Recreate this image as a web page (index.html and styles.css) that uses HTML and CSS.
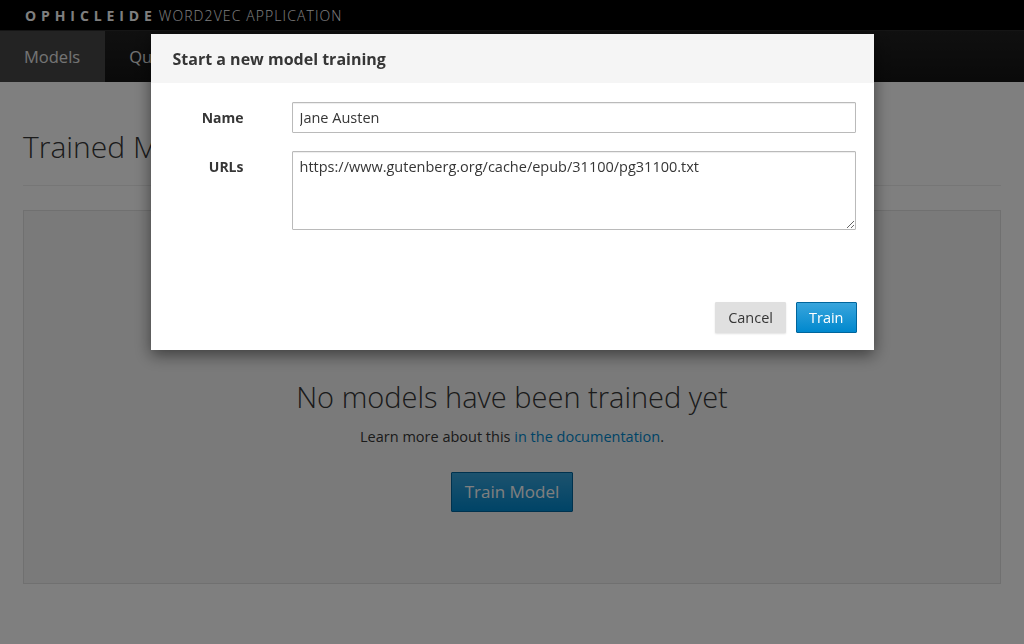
FILE: index.html
```html
<!DOCTYPE html>
<html lang="en">
<head>
    <meta charset="UTF-8">
    <title>Ophicleide</title>
    <link rel="stylesheet" href="styles.css">
</head>
<body>
<div class="masthead">
    <span class="brand-name">OPHICLEIDE</span>
    <span class="brand-sub">WORD2VEC APPLICATION</span>
</div>
<nav class="navbar">
    <ul>
        <li class="active">Models</li>
        <li>Query</li>
    </ul>
</nav>
<div class="page">
    <h1 class="page-title">Trained Models</h1>
    <div class="empty-state">
        <h2>No models have been trained yet</h2>
        <p>Learn more about this <a href="#">in the documentation</a>.</p>
        <button class="btn btn-primary btn-lg">Train Model</button>
    </div>
</div>

<div class="backdrop"></div>
<div class="modal-wrap">
    <div class="modal">
        <div class="modal-header">
            <h4>Start a new model training</h4>
        </div>
        <div class="modal-body">
            <div class="form-row">
                <label class="name-label" for="name">Name</label>
                <input id="name" type="text" value="Jane Austen">
            </div>
            <div class="form-row">
                <label class="urls-label" for="urls">URLs</label>
                <textarea id="urls">https://www.gutenberg.org/cache/epub/31100/pg31100.txt</textarea>
            </div>
        </div>
        <div class="modal-footer">
            <button class="btn btn-default">Cancel</button>
            <button class="btn btn-primary">Train</button>
        </div>
    </div>
</div>
</body>
</html>
```

FILE: styles.css
```css
* {
    margin: 0;
    padding: 0;
    box-sizing: border-box;
}
body {
    font-family: "Open Sans", "Liberation Sans", sans-serif;
    font-size: 14.5px;
    color: #363636;
    background: #fff;
    width: 1024px;
    height: 644px;
    overflow: hidden;
}

/* top bar */
.masthead {
    height: 30px;
    background: #000;
    padding-left: 25px;
    display: flex;
    align-items: center;
    font-size: 14px;
}
.brand-name {
    color: #fff;
    font-weight: 700;
    letter-spacing: 4.9px;
}
.brand-sub {
    color: #fff;
    font-weight: 300;
    letter-spacing: 1.1px;
    margin-left: 2px;
}

.navbar {
    height: 52px;
    background: linear-gradient(#202020, #141414);
    border-top: 1px solid #2a2a2a;
}
.navbar ul {
    display: flex;
    height: 100%;
    list-style: none;
}
.navbar li {
    display: flex;
    align-items: center;
    padding: 0 25px 0 24px;
    color: #e8e8e8;
    font-size: 16.5px;
}
.navbar li.active {
    background: #464646;
}

/* page */
.page {
    padding: 0 23px;
}
.page-title {
    font-size: 30px;
    font-weight: 300;
    line-height: 36px;
    color: #363636;
    margin-top: 47px;
    padding-bottom: 20px;
    border-bottom: 1px solid #ececec;
}
.empty-state {
    margin-top: 24px;
    height: 374px;
    background: #f5f5f5;
    border: 1px solid #e0e0e0;
    text-align: center;
    padding-top: 168px;
}
.empty-state h2 {
    font-size: 29px;
    font-weight: 300;
    line-height: 36px;
}
.empty-state p {
    margin-top: 12px;
    line-height: 20px;
}
.empty-state a {
    color: #0088ce;
    text-decoration: none;
}
.empty-state .btn {
    margin-top: 25px;
}

/* buttons */
.btn {
    font-family: inherit;
    font-size: 14.5px;
    line-height: 21px;
    padding: 4px 12px;
    border-radius: 1px;
    border: 1px solid transparent;
    cursor: pointer;
}
.btn-default {
    background: #e0e0e0;
    border-color: #e0e0e0;
    color: #363636;
    box-shadow: 0 1px 2px rgba(0, 0, 0, 0.12);
}
.btn-primary {
    background: linear-gradient(#39a5dc, #0088ce);
    border-color: #00659c;
    color: #fff;
}
.btn-lg {
    font-size: 17px;
    line-height: 24px;
    padding: 7px 13px;
}

/* modal */
.backdrop {
    position: fixed;
    top: 0;
    left: 0;
    right: 0;
    bottom: 0;
    background: rgba(0, 0, 0, 0.5);
}
.modal-wrap {
    position: fixed;
    top: 34px;
    left: 0;
    right: 0;
}
.modal {
    width: 723px;
    margin: 0 auto;
    background: #fff;
    box-shadow: 0 5px 15px rgba(0, 0, 0, 0.5);
}
.modal-header {
    background: #f5f5f5;
    height: 49px;
    padding: 0 22px;
    display: flex;
    align-items: center;
}
.modal-header h4 {
    font-size: 16px;
    font-weight: 700;
    color: #363636;
}
.modal-body {
    padding: 19px 18px 0;
    display: flex;
    flex-direction: column;
    gap: 18px;
}
.form-row {
    display: grid;
    grid-template-columns: 75px 1fr;
    column-gap: 48px;
}
.form-row label {
    text-align: right;
    font-weight: 700;
    font-size: 14px;
    color: #363636;
}
.name-label {
    align-self: center;
}
.urls-label {
    padding-top: 6px;
}
.form-row input,
.form-row textarea {
    font-family: inherit;
    font-size: 14.5px;
    color: #363636;
    border: 1px solid #bababa;
    border-radius: 1px;
    padding: 5px 7px;
    box-shadow: inset 0 1px 1px rgba(3, 3, 3, 0.075);
}
.form-row input {
    height: 31px;
}
.form-row textarea {
    height: 79px;
    resize: vertical;
    line-height: 20px;
    overflow: hidden;
}
.modal-footer {
    display: flex;
    justify-content: flex-end;
    gap: 10px;
    padding: 72px 17px 17px 0;
}
```
